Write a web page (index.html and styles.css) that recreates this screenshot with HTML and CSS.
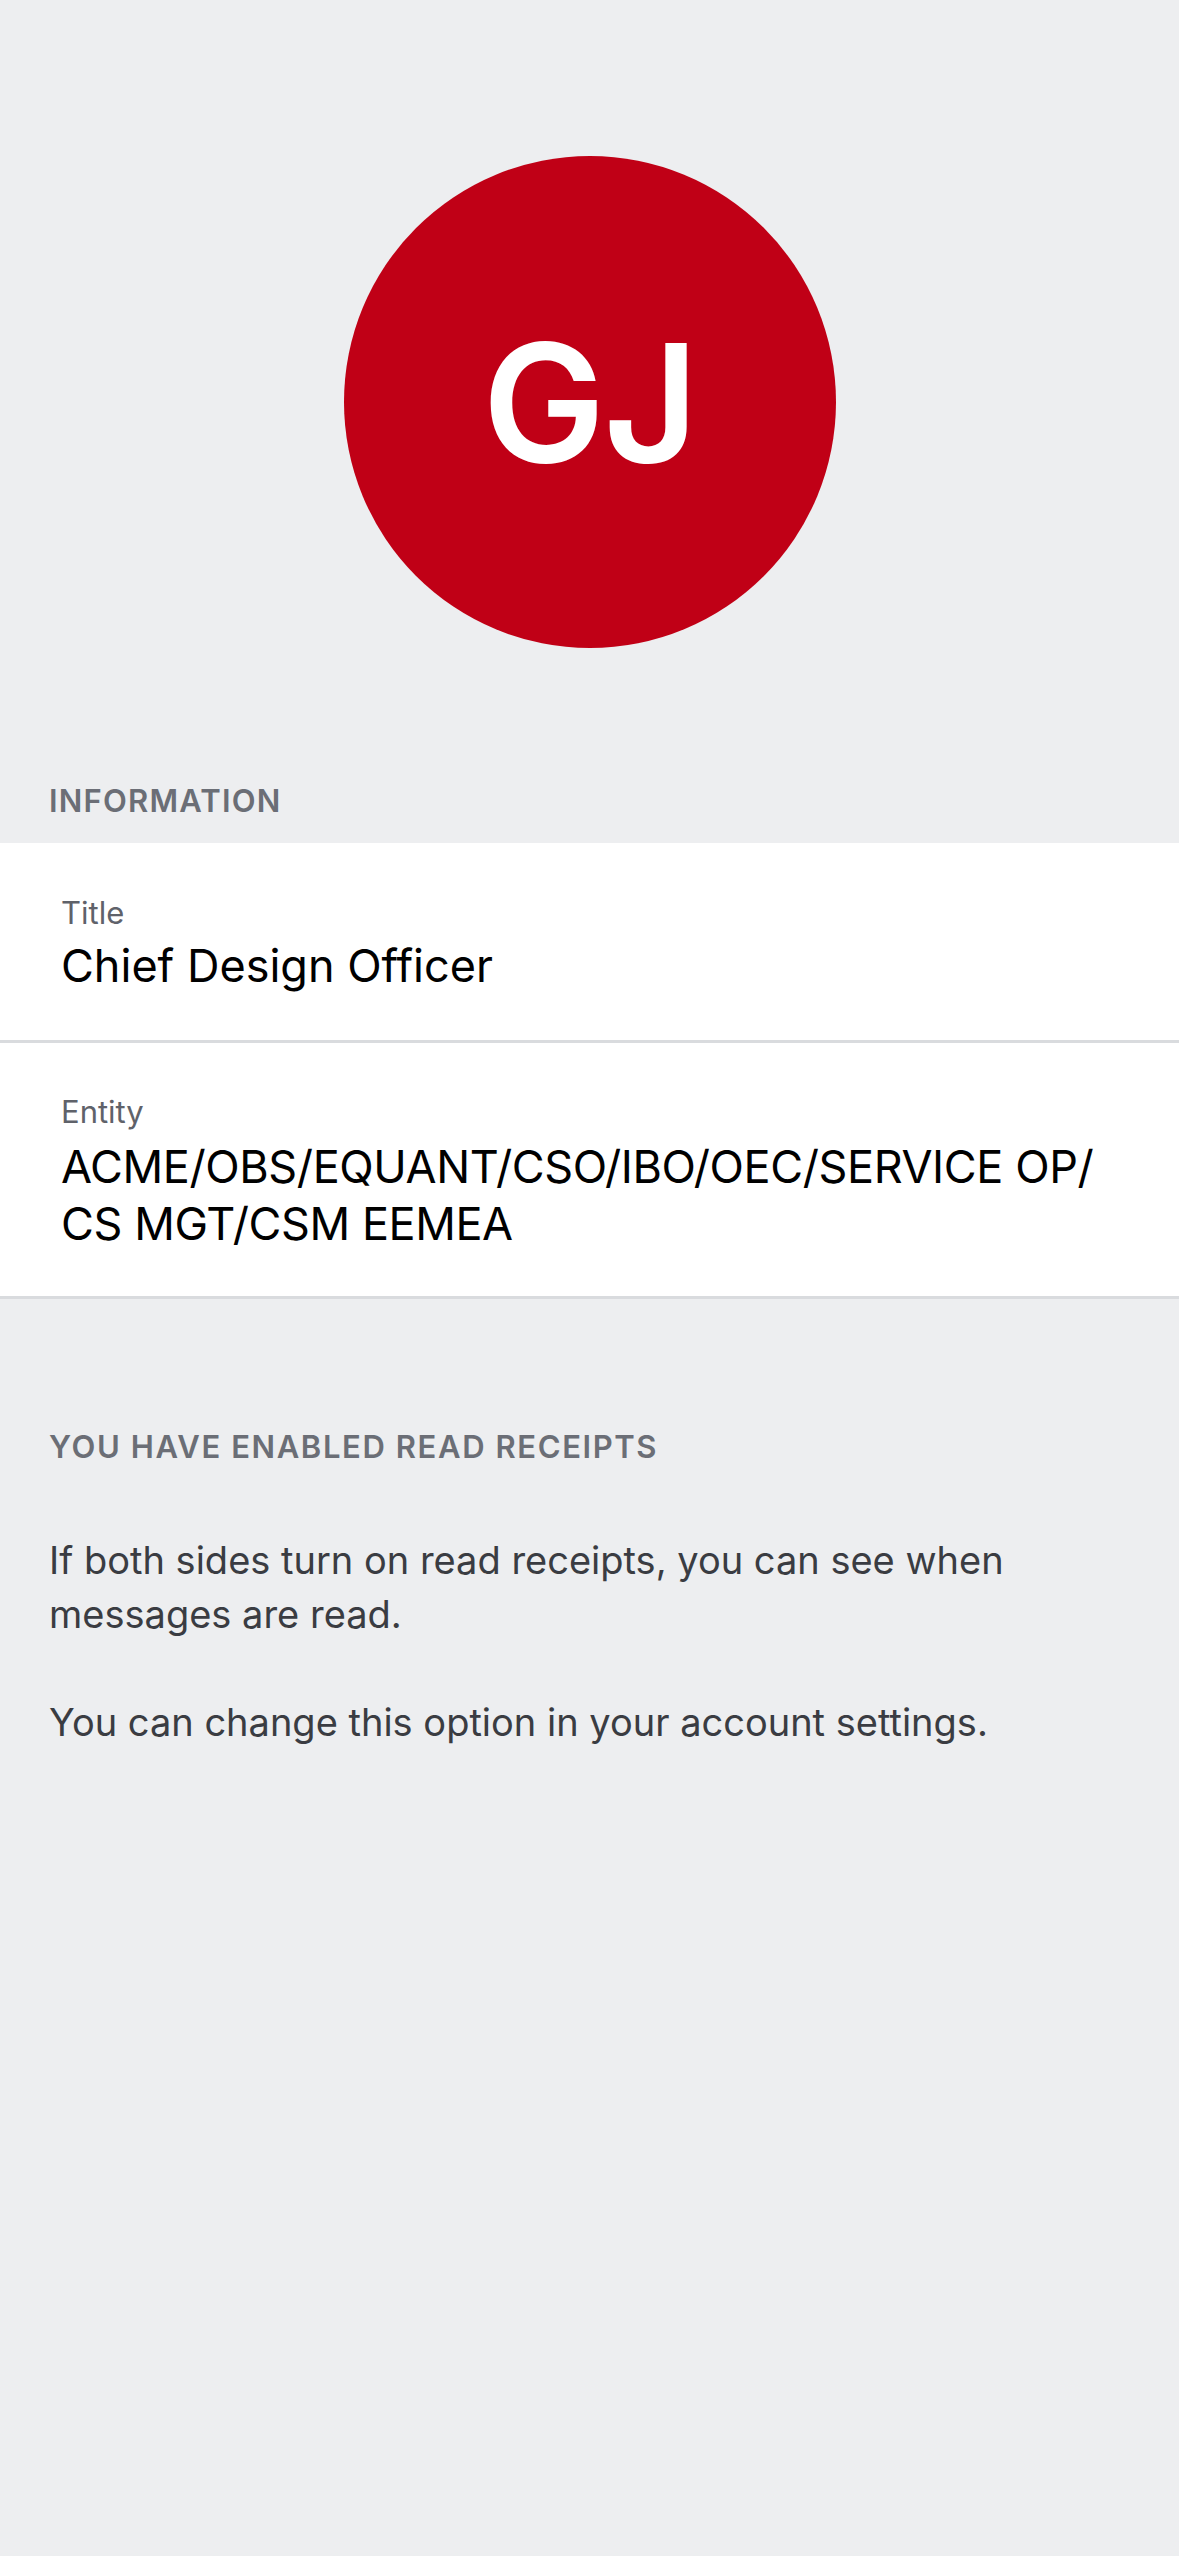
FILE: index.html
```html
<!DOCTYPE html>
<html lang="en">
<head>
<meta charset="utf-8">
<title>Contact</title>
<link rel="stylesheet" href="styles.css">
</head>
<body>
<div class="page">
  <div class="avatar-wrap">
    <div class="avatar">GJ</div>
  </div>
  <div class="section-header">INFORMATION</div>
  <div class="card">
    <div class="row">
      <div class="label">Title</div>
      <div class="value">Chief Design Officer</div>
    </div>
    <div class="row">
      <div class="label">Entity</div>
      <div class="value entity">ACME/OBS/EQUANT/CSO/IBO/OEC/SERVICE OP/<br>CS MGT/CSM EEMEA</div>
    </div>
  </div>
  <div class="section-header receipts">YOU HAVE ENABLED READ RECEIPTS</div>
  <div class="note">
    <p>If both sides turn on read receipts, you can see when messages are read.</p>
    <p>You can change this option in your account settings.</p>
  </div>
</div>
</body>
</html>
```

FILE: styles.css
```css
html, body {
  margin: 0;
  padding: 0;
  background: #edeef0;
}
body {
  font-family: Inter, "Noto Sans", sans-serif;
  width: 1179px;
  min-height: 2556px;
}
.page {
  display: flex;
  flex-direction: column;
}
.avatar-wrap {
  display: flex;
  justify-content: center;
  padding-top: 156px;
}
.avatar {
  width: 492px;
  height: 492px;
  border-radius: 50%;
  background: #c00016;
  color: #fff;
  display: flex;
  align-items: center;
  justify-content: center;
  font-size: 164px;
  font-weight: 600;
  letter-spacing: -2px;
}
.section-header {
  padding: 133px 49px 0;
  height: 62px;
  font-size: 31px;
  line-height: 40px;
  font-weight: 600;
  letter-spacing: 1.2px;
  color: #6b6e76;
}
.section-header.receipts {
  padding-top: 128px;
  height: auto;
  letter-spacing: 1.6px;
}
.card {
  background: #fff;
  border-bottom: 3px solid #d9dbde;
}
.row {
  padding: 50px 61px 46px;
}
.row + .row {
  border-top: 3px solid #d9dbde;
  padding-top: 49px;
  padding-bottom: 44px;
}
.label {
  font-size: 31px;
  line-height: 40px;
  color: #5f626a;
}
.value {
  font-size: 45px;
  line-height: 57px;
  color: #000;
  margin-top: 4px;
  font-weight: 400;
}
.value.entity {
  margin-top: 6px;
  letter-spacing: -0.4px;
}
.note {
  padding: 66px 49px 0 49px;
  color: #3a3c42;
  font-size: 38px;
  line-height: 54px;
}
.note p {
  margin: 0 0 54px;
  width: 1000px;
}
```
